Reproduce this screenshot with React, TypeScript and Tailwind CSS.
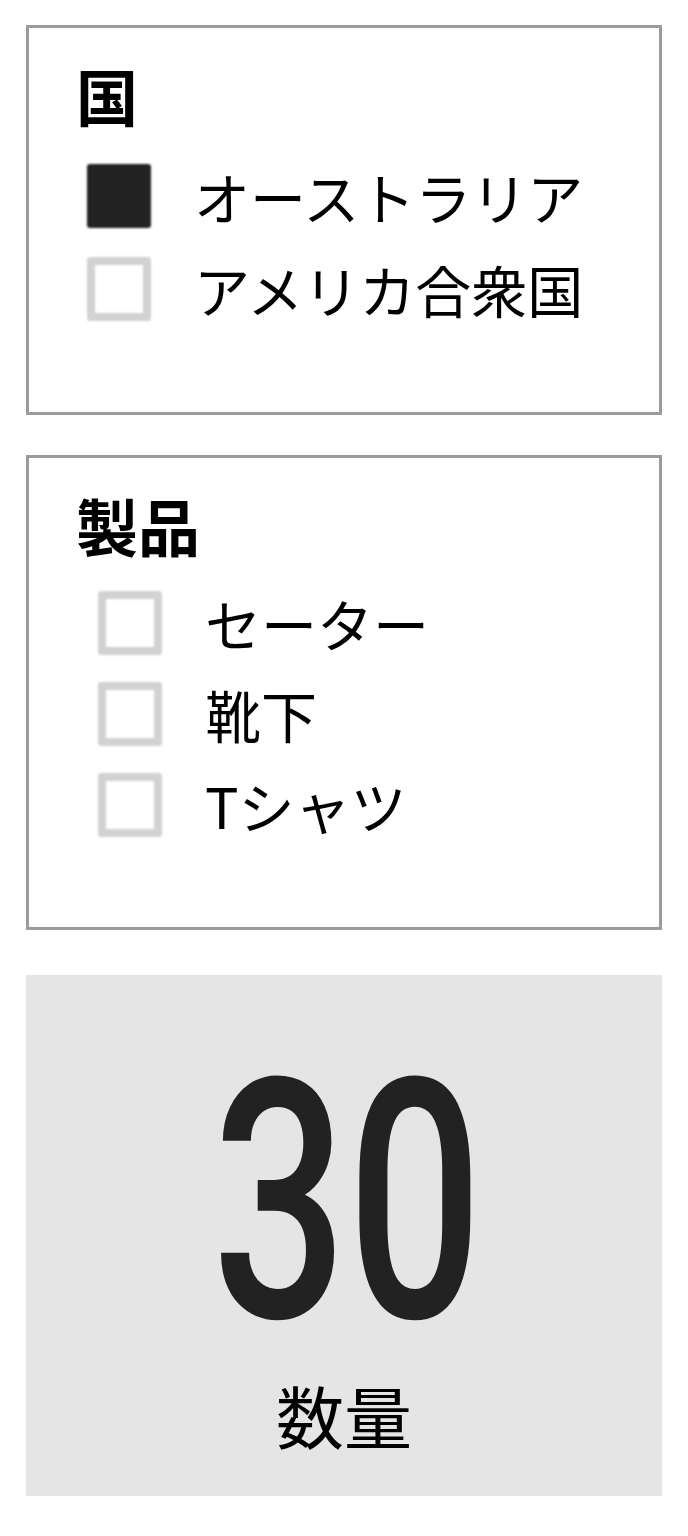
const jp = "font-['Noto_Sans_CJK_JP','Noto_Sans',sans-serif]";

type Option = { label: string; checked?: boolean };

function Checkbox({ checked }: { checked?: boolean }) {
  return checked ? (
    <div className="w-[64px] h-[64px] shrink-0 rounded-[3px] bg-[#222222] blur-[1px]" />
  ) : (
    <div className="w-[64px] h-[64px] shrink-0 rounded-[3px] border-[8px] border-[#d2d2d2] bg-white blur-[1px]" />
  );
}

function FilterGroup({
  title,
  options,
  listClass,
  height,
}: {
  title: string;
  options: Option[];
  listClass: string;
  height: string;
}) {
  return (
    <section className={`border-[3px] border-[#9b9b9b] bg-white pl-[47px] pt-[36px] ${height}`}>
      <h2 className={`${jp} text-[62px] font-bold leading-none text-black`}>{title}</h2>
      <ul className={`flex flex-col ${listClass}`}>
        {options.map((o) => (
          <li key={o.label} className="flex items-center gap-[43px]">
            <Checkbox checked={o.checked} />
            <span className={`${jp} text-[56px] leading-none text-black`}>{o.label}</span>
          </li>
        ))}
      </ul>
    </section>
  );
}

export default function App() {
  return (
    <div className="w-[688px] h-[1536px] bg-white px-[26px] pt-[25px] flex flex-col">
      <FilterGroup
        title="国"
        height="h-[390px]"
        listClass="mt-[38px] gap-[29px] pl-[11px]"
        options={[{ label: "オーストラリア", checked: true }, { label: "アメリカ合衆国" }]}
      />
      <div className="h-[40px]" />
      <FilterGroup
        title="製品"
        height="h-[475px]"
        listClass="mt-[35px] gap-[27px] pl-[22px]"
        options={[{ label: "セーター" }, { label: "靴下" }, { label: "Tシャツ" }]}
      />
      <div className="h-[45px]" />
      {/* total quantity tile */}
      <section className="h-[521px] bg-[#e5e5e5] flex flex-col items-center pt-[94px]">
        <div className="font-['Roboto',sans-serif] text-[335px] font-medium leading-[0.8] text-[#222222] scale-x-[0.71] pl-[8px]">
          30
        </div>
        <div className={`${jp} mt-[44px] text-[68px] leading-none text-black`}>数量</div>
      </section>
    </div>
  );
}
